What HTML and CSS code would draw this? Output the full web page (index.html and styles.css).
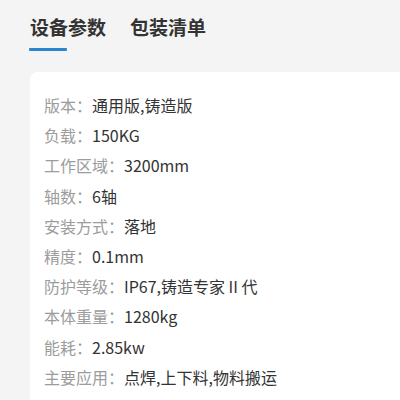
FILE: index.html
```html
<!DOCTYPE html>
<html lang="zh">
<head>
<meta charset="utf-8">
<link rel="stylesheet" href="styles.css">
</head>
<body>
<div class="page">
  <div class="tabs">
    <div class="tab active"><span class="tab-text">设备参数</span><span class="tab-bar"></span></div>
    <div class="tab"><span class="tab-text">包装清单</span></div>
  </div>
  <div class="card">
    <div class="row"><span class="label">版本：</span><span class="value">通用版,铸造版</span></div>
    <div class="row"><span class="label">负载：</span><span class="value">150KG</span></div>
    <div class="row"><span class="label">工作区域：</span><span class="value">3200mm</span></div>
    <div class="row"><span class="label">轴数：</span><span class="value">6轴</span></div>
    <div class="row"><span class="label">安装方式：</span><span class="value">落地</span></div>
    <div class="row"><span class="label">精度：</span><span class="value">0.1mm</span></div>
    <div class="row"><span class="label">防护等级：</span><span class="value">IP67,铸造专家 II 代</span></div>
    <div class="row"><span class="label">本体重量：</span><span class="value">1280kg</span></div>
    <div class="row"><span class="label">能耗：</span><span class="value">2.85kw</span></div>
    <div class="row"><span class="label">主要应用：</span><span class="value">点焊,上下料,物料搬运</span></div>
  </div>
</div>
</body>
</html>
```

FILE: styles.css
```css
html, body {
  margin: 0;
  padding: 0;
  background: #f4f4f4;
  font-family: "Noto Sans CJK SC", "Noto Sans", sans-serif;
  overflow: hidden;
}
.page {
  width: 400px;
  height: 400px;
  overflow: hidden;
}
.tabs {
  display: flex;
  gap: 24px;
  padding: 15px 0 0 30px;
}
.tab {
  display: flex;
  flex-direction: column;
}
.tab-text {
  font-size: 19px;
  line-height: 24px;
  font-weight: 700;
  color: #333333;
}
.tab-bar {
  display: block;
  width: 38px;
  height: 3px;
  margin: 9px 0 0 -1px;
  background: #2a86cc;
  border-radius: 1px;
}
.card {
  margin: 21px -20px 0 30px;
  background: #ffffff;
  border-radius: 8px;
  padding: 18px 0 20px 14px;
  height: 400px;
}
.row {
  display: flex;
  font-size: 16px;
  line-height: 30.2px;
  white-space: nowrap;
}
.label {
  color: #9c9c9c;
}
.value {
  color: #333333;
}
```
